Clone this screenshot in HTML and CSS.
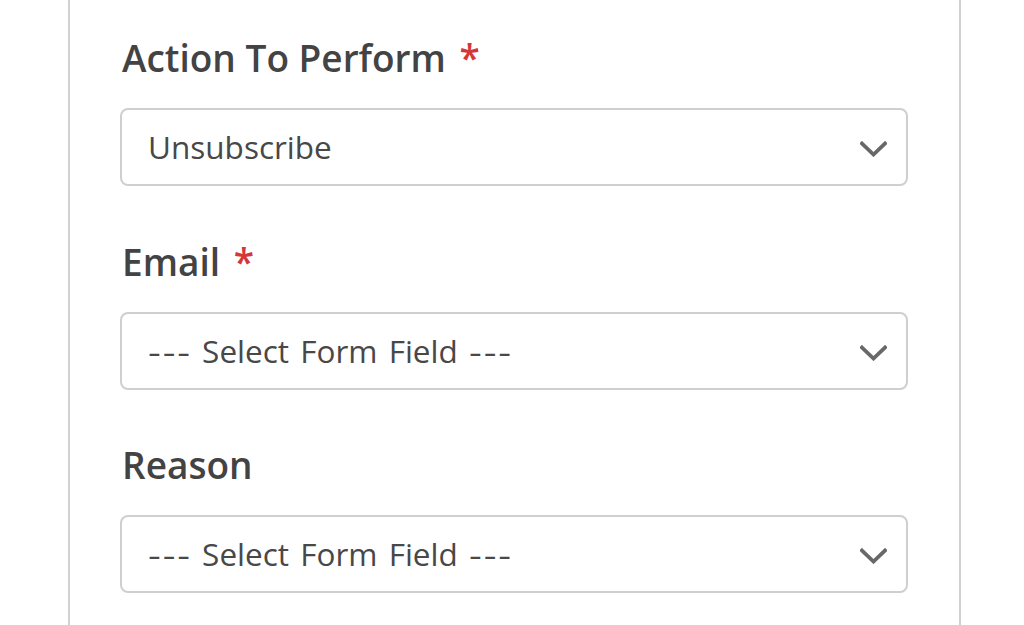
FILE: index.html
```html
<!DOCTYPE html>
<html lang="en">
<head>
<meta charset="utf-8">
<title>Action settings</title>
<link rel="stylesheet" href="styles.css">
</head>
<body>
<div class="panel">
  <div class="field">
    <div class="label">Action To Perform <span class="req">*</span></div>
    <div class="select">
      <span class="value">Unsubscribe</span>
      <svg class="chev" width="27" height="16" viewBox="0 0 27 16"><polyline points="2,2.5 13.5,13.5 25,2.5" fill="none" stroke="#686868" stroke-width="3.8" stroke-linecap="square"/></svg>
    </div>
  </div>
  <div class="field">
    <div class="label">Email <span class="req">*</span></div>
    <div class="select">
      <span class="value"><span class="dash">---</span> Select Form Field <span class="dash">---</span></span>
      <svg class="chev" width="27" height="16" viewBox="0 0 27 16"><polyline points="2,2.5 13.5,13.5 25,2.5" fill="none" stroke="#686868" stroke-width="3.8" stroke-linecap="square"/></svg>
    </div>
  </div>
  <div class="field">
    <div class="label">Reason</div>
    <div class="select">
      <span class="value"><span class="dash">---</span> Select Form Field <span class="dash">---</span></span>
      <svg class="chev" width="27" height="16" viewBox="0 0 27 16"><polyline points="2,2.5 13.5,13.5 25,2.5" fill="none" stroke="#686868" stroke-width="3.8" stroke-linecap="square"/></svg>
    </div>
  </div>
</div>
</body>
</html>
```
FILE: styles.css
```css
html, body {
  margin: 0;
  padding: 0;
  background: #fff;
  height: 100%;
  overflow: hidden;
}
body {
  font-family: "Open Sans", "Noto Sans", sans-serif;
}
.panel {
  margin-left: 68px;
  width: 893px;
  min-height: 100%;
  box-sizing: border-box;
  border-left: 2px solid #d2d2d2;
  border-right: 2px solid #d2d2d2;
  padding: 36px 51px 0 50px;
}
.field {
  margin-bottom: 53.5px;
}
.field:last-child {
  margin-bottom: 0;
}
.label {
  font-size: 37px;
  line-height: 44px;
  font-weight: 600;
  color: #434343;
  margin-bottom: 28px;
  padding-left: 2px;
}
.req {
  color: #d63638;
  margin-left: 4px;
}
.select {
  height: 74px;
  border: 2px solid #cfcfcf;
  border-radius: 8px;
  display: flex;
  align-items: center;
  justify-content: space-between;
  padding: 0 19px 0 26px;
}
.value {
  font-size: 31.5px;
  color: #484848;
  line-height: 44px;
  word-spacing: 3px;
}
.dash {
  display: inline-block;
  letter-spacing: 1.5px;
  transform: scaleX(1.26);
  transform-origin: left center;
  margin-right: 8px;
}
.chev {
  margin-top: 4px;
}
```
